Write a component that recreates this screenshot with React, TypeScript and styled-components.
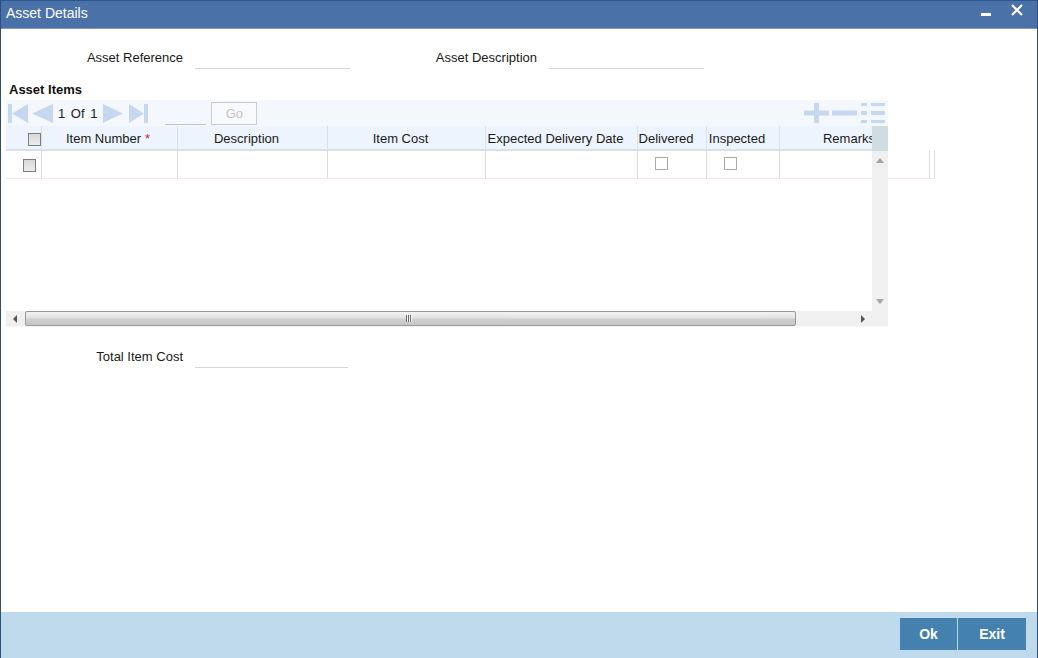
import React from 'react'
import styled, { createGlobalStyle } from 'styled-components';

const GlobalStyle = createGlobalStyle`
    * { box-sizing: border-box; }
    html, body { margin: 0; padding: 0; background: #fff; }
    body { font-family: "Liberation Sans", Arial, sans-serif; color: #1a1a1a; }
`

const columns = [
    { key: 'check', width: 36, label: '' },
    { key: 'number', width: 136, label: 'Item Number' },
    { key: 'desc', width: 150, label: 'Description' },
    { key: 'cost', width: 158, label: 'Item Cost' },
    { key: 'date', width: 152, label: 'Expected Delivery Date' },
    { key: 'delivered', width: 69, label: 'Delivered' },
    { key: 'inspected', width: 73, label: 'Inspected' },
    { key: 'remarks', width: 150, label: 'Remarks' },
];

const ICON = '#c6d8f0';

const App: React.FC = () => {
    return (
        <>
            <GlobalStyle />
            <Window>
                <TitleBar>
                    <Title>Asset Details</Title>
                    <WindowButtons>
                        <svg width="10" height="4" viewBox="0 0 10 4"><rect width="10" height="3" y="1" fill="#fff" /></svg>
                        <svg width="12" height="12" viewBox="0 0 12 12">
                            <path d="M1 1 L11 11 M11 1 L1 11" stroke="#fff" strokeWidth="2.2" />
                        </svg>
                    </WindowButtons>
                </TitleBar>

                <Body>
                    <FieldRow>
                        <Label $width={182}>Asset Reference</Label>
                        <LineInput $width={155} />
                        <Label $width={187}>Asset Description</Label>
                        <LineInput $width={155} />
                    </FieldRow>

                    <SectionTitle>Asset Items</SectionTitle>

                    <GridPanel>
                        <Toolbar>
                            <svg width="20" height="19" viewBox="0 0 20 19"><rect width="4" height="19" fill={ICON} /><polygon points="20,0 4,9.5 20,19" fill={ICON} /></svg>
                            <svg width="21" height="19" viewBox="0 0 21 19" style={{ marginLeft: 4 }}><polygon points="21,0 0,9.5 21,19" fill={ICON} /></svg>
                            <PageText>1 Of 1</PageText>
                            <svg width="20" height="19" viewBox="0 0 20 19"><polygon points="0,0 20,9.5 0,19" fill={ICON} /></svg>
                            <svg width="19" height="19" viewBox="0 0 19 19" style={{ marginLeft: 6 }}><polygon points="0,0 15,9.5 0,19" fill={ICON} /><rect x="15" width="4" height="19" fill={ICON} /></svg>
                            <PageInput />
                            <GoButton>Go</GoButton>
                            <Spacer />
                            <svg width="25" height="20" viewBox="0 0 25 20"><rect x="10" width="5" height="20" fill={ICON} /><rect y="7.5" width="25" height="5" fill={ICON} /></svg>
                            <svg width="25" height="20" viewBox="0 0 25 20" style={{ marginLeft: 3 }}><rect y="7.5" width="25" height="5" fill={ICON} /></svg>
                            <svg width="24" height="20" viewBox="0 0 24 20" style={{ marginLeft: 4 }}>
                                <rect y="0" width="6" height="3" fill={ICON} /><rect x="10" y="0" width="14" height="3" fill={ICON} />
                                <rect y="8" width="6" height="4" fill={ICON} /><rect x="10" y="8" width="14" height="4" fill={ICON} />
                                <rect y="17" width="6" height="3" fill={ICON} /><rect x="10" y="17" width="14" height="3" fill={ICON} />
                            </svg>
                        </Toolbar>

                        <Viewport>
                            <HeaderRow>
                                <HeaderCells>
                                    {columns.map(col => (
                                        <HeaderCell key={col.key} $width={col.width} $check={col.key === 'check'}>
                                            {col.key === 'check' ? <CheckBox $filled /> : col.label}
                                            {col.key === 'number' && <Required>*</Required>}
                                        </HeaderCell>
                                    ))}
                                </HeaderCells>
                                <HeaderCorner />
                            </HeaderRow>

                            <DataRow>
                                {columns.map(col => {
                                    const box = col.key === 'check' || col.key === 'delivered' || col.key === 'inspected';
                                    return (
                                        <DataCell key={col.key} $width={col.width} $box={box}>
                                            {col.key === 'check' && <CheckBox $filled />}
                                            {(col.key === 'delivered' || col.key === 'inspected') && <CheckBox />}
                                        </DataCell>
                                    )
                                })}
                                <DataCell $width={5} />
                            </DataRow>

                            <VScroll>
                                <svg width="8" height="5" viewBox="0 0 8 5"><polygon points="0,5 4,0 8,5" fill="#a2a2a2" /></svg>
                                <svg width="8" height="5" viewBox="0 0 8 5"><polygon points="0,0 4,5 8,0" fill="#a2a2a2" /></svg>
                            </VScroll>
                        </Viewport>

                        <HScroll>
                            <ArrowButton>
                                <svg width="4" height="8" viewBox="0 0 4 8"><polygon points="4,0 0,4 4,8" fill="#555" /></svg>
                            </ArrowButton>
                            <Track>
                                <Thumb>
                                    <Grip>
                                        <span /><span /><span />
                                    </Grip>
                                </Thumb>
                            </Track>
                            <ArrowButton>
                                <svg width="4" height="8" viewBox="0 0 4 8"><polygon points="0,0 4,4 0,8" fill="#555" /></svg>
                            </ArrowButton>
                            <ScrollCorner />
                        </HScroll>
                    </GridPanel>

                    <TotalRow>
                        <Label $width={182}>Total Item Cost</Label>
                        <LineInput $width={153} />
                    </TotalRow>
                </Body>

                <Footer>
                    <FooterButton $width={57}>Ok</FooterButton>
                    <FooterButton $width={68}>Exit</FooterButton>
                </Footer>
            </Window>
        </>
    )
}

export default App;

const Window = styled.div`
    width: 1038px;
    height: 658px;
    display: flex;
    flex-direction: column;
    border-left: 1px solid #2c4d7e;
    border-right: 1px solid #2c4d7e;
    overflow: hidden;
`

const TitleBar = styled.div`
    height: 29px;
    flex-shrink: 0;
    display: flex;
    align-items: center;
    justify-content: space-between;
    background: #4a72a9;
    border-top: 1px solid #2b5591;
    border-bottom: 1px solid #8398ae;
    padding: 0 14px 1px 5px;
`

const Title = styled.div`
    color: #fff;
    font-size: 14px;
    margin-top: -2px;
`

const WindowButtons = styled.div`
    display: flex;
    align-items: flex-start;
    gap: 20px;
    height: 100%;
    padding-top: 3px;

    svg:first-child { margin-top: 8px; }
`

const Body = styled.div`
    flex: 1;
    display: flex;
    flex-direction: column;
    background: #fff;
`

const FieldRow = styled.div`
    display: flex;
    align-items: center;
    height: 22px;
    margin-top: 17px;
`

const Label = styled.div<{ $width: number }>`
    width: ${p => p.$width}px;
    flex-shrink: 0;
    text-align: right;
    font-size: 13px;
    color: #1a1a1a;
`

const LineInput = styled.div<{ $width: number }>`
    width: ${p => p.$width}px;
    height: 22px;
    margin-left: 12px;
    margin-top: 2px;
    border-bottom: 1px solid #d4d4d4;
`

const SectionTitle = styled.div`
    margin-top: 14px;
    padding-left: 8px;
    height: 16px;
    line-height: 16px;
    font-size: 13px;
    font-weight: bold;
    color: #111;
`

const GridPanel = styled.div`
    margin: 2px 0 0 5px;
    width: 882px;
`

const Toolbar = styled.div`
    height: 26px;
    display: flex;
    align-items: center;
    padding: 0 3px 0 2px;
    background: #f4f8fd;
`

const PageText = styled.span`
    font-size: 13px;
    color: #222;
    word-spacing: 2px;
    margin: 0 6px 0 5px;
`

const PageInput = styled.div`
    width: 41px;
    height: 21px;
    margin-left: 17px;
    margin-top: 2px;
    border-bottom: 1px solid #c4c4c4;
`

const GoButton = styled.div`
    width: 46px;
    height: 23px;
    margin-left: 5px;
    border: 1px solid #cbcbcb;
    background: #f7f9fc;
    color: #c4c4c4;
    font-size: 13px;
    display: flex;
    align-items: center;
    justify-content: center;
`

const Spacer = styled.div`
    flex: 1;
`

const Viewport = styled.div`
    position: relative;
    height: 185px;
    width: 882px;
`

const HeaderRow = styled.div`
    display: flex;
    height: 25px;
`

const HeaderCells = styled.div`
    display: flex;
    width: 866px;
    overflow: hidden;
    background: #edf4fd;
    border-bottom: 2px solid #d8e1eb;
`

const HeaderCell = styled.div<{ $width: number; $check: boolean }>`
    width: ${p => p.$width}px;
    flex-shrink: 0;
    display: flex;
    align-items: center;
    justify-content: ${p => p.$check ? 'flex-end' : 'center'};
    padding: 1px ${p => p.$check ? '0' : '12px'} 0 0;
    font-size: 13px;
    color: #1a1a1a;
    white-space: nowrap;
    border-right: 1px solid #d6e2ef;

    &:last-child { border-right: none; }
`

const Required = styled.span`
    color: #d21c1c;
    margin: 0 -10px 0 4px;
    width: 6px;
    font-size: 13px;
`

const HeaderCorner = styled.div`
    width: 16px;
    background: #cfdde3;
`

const DataRow = styled.div`
    display: flex;
    width: 929px;
    height: 28px;
    border-bottom: 1px solid #f6e8e2;
`

const DataCell = styled.div<{ $width: number; $box?: boolean }>`
    width: ${p => p.$width}px;
    flex-shrink: 0;
    display: flex;
    align-items: center;
    padding-left: ${p => p.$box ? '17px' : '0'};
    border-right: 1px solid #dcdcdc;
`

const CheckBox = styled.span<{ $filled?: boolean }>`
    display: inline-block;
    width: 13px;
    height: 13px;
    border: 1px solid ${p => p.$filled ? '#7d7d7d' : '#aaaaaa'};
    background: ${p => p.$filled ? 'linear-gradient(#d8d8d8, #ececec)' : '#fff'};
    margin-top: ${p => p.$filled ? '2px' : '-2px'};
`

const VScroll = styled.div`
    position: absolute;
    right: 0;
    top: 25px;
    bottom: 0;
    width: 16px;
    background: #f0f0f0;
    display: flex;
    flex-direction: column;
    justify-content: space-between;
    align-items: center;
    padding: 7px 0 7px;
`

const HScroll = styled.div`
    display: flex;
    height: 16px;
    background: #f0f0f0;
    border-bottom: 1px solid #f6f6f6;
`

const ArrowButton = styled.div`
    width: 18px;
    display: flex;
    align-items: center;
    justify-content: center;
`

const Track = styled.div`
    flex: 1;
    display: flex;
    align-items: center;
    padding-right: 58px;
`

const Thumb = styled.div`
    flex: 1;
    height: 15px;
    margin-left: 1px;
    border: 1px solid #9a9a9a;
    border-radius: 2px;
    background: linear-gradient(#f3f3f3, #e2e2e2 45%, #cfcfcf 55%, #c6c6c6);
    display: flex;
    align-items: center;
    justify-content: center;
`

const Grip = styled.div`
    display: flex;
    gap: 1px;
    padding-right: 4px;

    span {
        width: 1px;
        height: 7px;
        background: #6c6c6c;
        box-shadow: 1px 0 0 #f6f6f6;
    }
`

const ScrollCorner = styled.div`
    width: 16px;
    background: #f0f0f0;
`

const TotalRow = styled.div`
    display: flex;
    align-items: center;
    height: 22px;
    margin-top: 18px;
`

const Footer = styled.div`
    height: 46px;
    flex-shrink: 0;
    display: flex;
    justify-content: flex-end;
    gap: 1px;
    padding: 6px 11px 0 0;
    background: #bfd9ed;
`

const FooterButton = styled.div<{ $width: number }>`
    width: ${p => p.$width}px;
    height: 32px;
    background: #4581b0;
    color: #fff;
    font-size: 14px;
    font-weight: bold;
    display: flex;
    align-items: center;
    justify-content: center;
`
